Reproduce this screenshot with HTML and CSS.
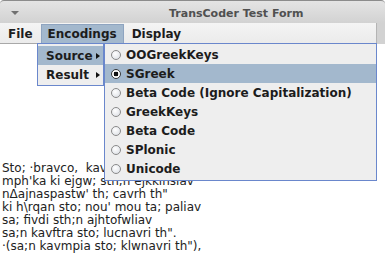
FILE: index.html
```html
<!DOCTYPE html>
<html>
<head>
<meta charset="utf-8">
<link rel="stylesheet" href="styles.css">
</head>
<body>
<div class="window">
  <div class="titlebar">
    <span class="tri"></span>
    <span class="title">TransCoder Test Form</span>
  </div>
  <div class="menurow">
    <div class="menubar">
      <span class="mi">File</span>
      <span class="mi active">Encodings</span>
      <span class="mi">Display</span>
    </div>
  </div>
  <div class="content">
<pre class="text">Sto; ·bravco,  kavpou sth;n a[kri
mph'ka ki ejgw; sth;n ejkkinsiav
nΔajnaspastw' th; cavrh th"
ki h\rqan sto; nou' mou ta; paliav
sa; fivdi sth;n ajhtofwliav
sa;n kavftra sto; lucnavri th".
·(sa;n kavmpia sto; klwnavri th"),</pre>
  </div>
  <div class="popup enc">
    <div class="item sel"><span>Source</span><span class="arrow"></span></div>
    <div class="item"><span>Result</span><span class="arrow"></span></div>
  </div>
  <div class="popup src">
    <div class="item"><span class="radio"></span><span>OOGreekKeys</span></div>
    <div class="item sel"><span class="radio on"></span><span>SGreek</span></div>
    <div class="item"><span class="radio"></span><span>Beta Code (Ignore Capitalization)</span></div>
    <div class="item"><span class="radio"></span><span>GreekKeys</span></div>
    <div class="item"><span class="radio"></span><span>Beta Code</span></div>
    <div class="item"><span class="radio"></span><span>SPlonic</span></div>
    <div class="item"><span class="radio"></span><span>Unicode</span></div>
  </div>
</div>
</body>
</html>
```
FILE: styles.css
```css
* { box-sizing: border-box; }
html, body { margin: 0; padding: 0; }
body { width: 385px; height: 261px; overflow: hidden; background: #fff; }
.window {
  position: relative;
  width: 385px;
  height: 261px;
  display: flex;
  flex-direction: column;
  font-family: "DejaVu Sans", sans-serif;
}
.titlebar {
  height: 23px;
  border-top: 1px solid #8c8c8c;
  border-radius: 4px 4px 0 0;
  background: linear-gradient(#e4e4e4, #d2d2d2);
  display: flex;
  align-items: center;
  padding-left: 11px;
}
.tri {
  width: 0; height: 0;
  border-left: 4px solid transparent;
  border-right: 4px solid transparent;
  border-top: 4px solid #707070;
  margin-top: 2px;
}
.title {
  font-weight: bold;
  font-size: 11px;
  color: #505050;
  margin-left: 150px;
  padding-top: 3px;
}
.menurow {
  display: flex;
  background: #d2d2d2;
}
.menubar {
  flex: 1;
  height: 21px;
  background: linear-gradient(#f4f4f4, #ebebeb);
  border-bottom: 1px solid #a8a8a8;
  border-right: 1px solid #b4b4b4;
  margin-right: 8px;
  display: flex;
  align-items: stretch;
  padding-left: 1px;
  padding-top: 1px;
}
.mi {
  font-weight: bold;
  font-size: 12px;
  color: #1c1c1c;
  padding: 0 6px;
  display: flex;
  align-items: center;
  border: 1px solid transparent;
  border-bottom: none;
}
.mi.active {
  background: #a3b8cd;
  border-color: #8ea4c0;
  margin-left: 1px;
  margin-right: 1px;
}
.content {
  flex: 1;
  background: #fff;
  padding: 118px 0 0 2px;
}
.text {
  margin: 0;
  font-family: "DejaVu Sans", sans-serif;
  font-size: 12px;
  line-height: 13px;
  color: #222;
}
.popup {
  position: absolute;
  background: #eeeeee;
  border: 1px solid #6a87cc;
  font-size: 12px;
  font-weight: bold;
  color: #1c1c1c;
}
.enc {
  left: 37px;
  top: 43px;
  width: 67px;
  height: 43px;
  padding: 2px 0;
}
.enc .item {
  height: 19px;
  display: flex;
  align-items: center;
  justify-content: space-between;
  padding: 0 3px 0 8px;
}
.src {
  left: 104px;
  top: 43px;
  width: 273px;
  height: 138px;
  padding: 1px 0 2px;
}
.src .item {
  height: 19px;
  display: flex;
  align-items: center;
  padding-left: 6px;
  gap: 5px;
}
.item.sel {
  background: #a3b8cd;
}
.arrow {
  width: 0; height: 0;
  border-top: 3.5px solid transparent;
  border-bottom: 3.5px solid transparent;
  border-left: 4px solid #111;
}
.radio {
  width: 10px;
  height: 10px;
  border-radius: 50%;
  border: 1px solid #8a8a8a;
  background: radial-gradient(circle at 40% 35%, #ffffff, #d8dce2);
  flex: none;
  position: relative;
}
.radio.on {
  border-color: #3a3a3a;
  background: radial-gradient(circle, #111 0 2.2px, #fff 2.6px);
}
```
